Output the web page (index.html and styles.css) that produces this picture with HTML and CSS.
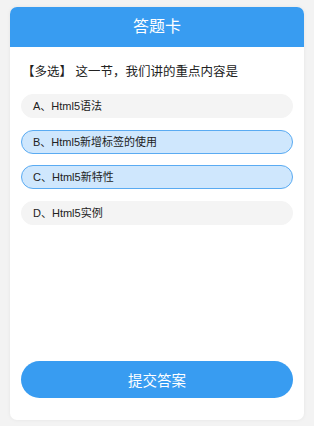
FILE: index.html
```html
<!DOCTYPE html>
<html lang="zh">
<head>
    <meta charset="UTF-8">
    <meta name="viewport" content="width=device-width, initial-scale=1.0">
    <title>答题卡</title>
    <link rel="stylesheet" href="styles.css">
</head>
<body>
    <div class="card">
        <div class="card-header">答题卡</div>
        <div class="card-body">
            <p class="question">【多选】 这一节，我们讲的重点内容是</p>
            <div class="options">
                <div class="option">A、Html5语法</div>
                <div class="option selected">B、Html5新增标签的使用</div>
                <div class="option selected">C、Html5新特性</div>
                <div class="option">D、Html5实例</div>
            </div>
            <button class="submit">提交答案</button>
        </div>
    </div>
</body>
</html>
```

FILE: styles.css
```css
body {
    margin: 0;
    padding: 7px 10px 6px;
    background: #f3f3f3;
    font-family: 'Liberation Sans', 'Noto Sans CJK SC', sans-serif;
    color: #222;
}

.card {
    background: #fff;
    border-radius: 7px;
    overflow: hidden;
    height: 413px;
    display: flex;
    flex-direction: column;
    box-shadow: 0 0 4px rgba(0, 0, 0, 0.06);
}

.card-header {
    background: #389cf1;
    color: #fff;
    height: 40px;
    line-height: 40px;
    text-align: center;
    font-size: 16px;
}

.card-body {
    flex: 1;
    display: flex;
    flex-direction: column;
    padding: 0 11px 22px;
}

.question {
    margin: 17px 0 0;
    font-size: 12.5px;
    line-height: 16px;
    padding-left: 1px;
}

.options {
    margin-top: 14px;
    display: flex;
    flex-direction: column;
    gap: 11.7px;
}

.option {
    height: 22px;
    line-height: 22px;
    border-radius: 12px;
    background: #f4f4f4;
    border: 1px solid #f4f4f4;
    padding: 0 11px;
    font-size: 11px;
    color: #222;
}

.option.selected {
    background: #cfe7fd;
    border-color: #5aabf2;
}

.submit {
    margin-top: auto;
    height: 37px;
    border: none;
    border-radius: 19px;
    background: #389cf1;
    color: #fff;
    font-size: 14.5px;
    font-family: inherit;
}
```
